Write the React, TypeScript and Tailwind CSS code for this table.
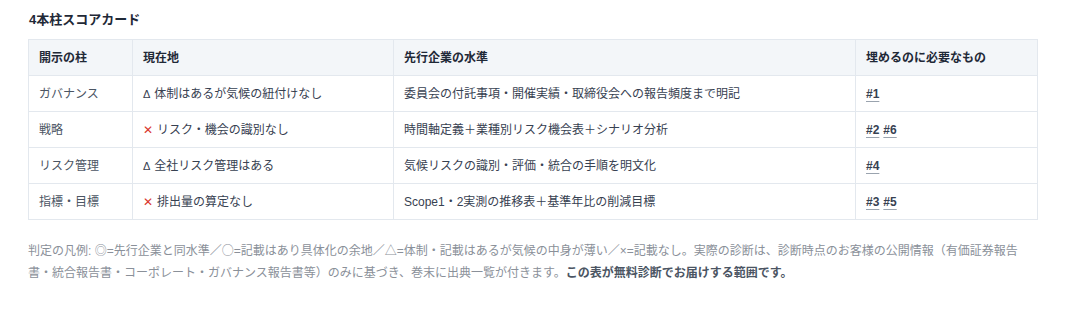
const rows = [
  {
    pillar: "ガバナンス",
    mark: "tri",
    current: "体制はあるが気候の紐付けなし",
    leader: "委員会の付託事項・開催実績・取締役会への報告頻度まで明記",
    needs: ["#1"],
  },
  {
    pillar: "戦略",
    mark: "x",
    current: "リスク・機会の識別なし",
    leader: "時間軸定義＋業種別リスク機会表＋シナリオ分析",
    needs: ["#2", "#6"],
  },
  {
    pillar: "リスク管理",
    mark: "tri",
    current: "全社リスク管理はある",
    leader: "気候リスクの識別・評価・統合の手順を明文化",
    needs: ["#4"],
  },
  {
    pillar: "指標・目標",
    mark: "x",
    current: "排出量の算定なし",
    leader: "Scope1・2実測の推移表＋基準年比の削減目標",
    needs: ["#3", "#5"],
  },
];

function Mark({ kind }: { kind: string }) {
  if (kind === "x") {
    return <span className="text-[#d9362b] mr-1">✕</span>;
  }
  return <span className="text-[#374151] mr-1 text-[11px]">Δ</span>;
}

export default function App() {
  return (
    <div
      className="bg-white px-[28px] pt-[10px] w-[1065px] min-h-[313px] text-[#374151]"
      style={{ fontFamily: '"Liberation Sans", "Noto Sans CJK JP", sans-serif' }}
    >
      <h2 className="text-[13px] font-bold text-[#1f2937] leading-[20px] mb-[9px] pl-px">
        4本柱スコアカード
      </h2>

      <table className="w-[1009px] border-collapse text-[12px] table-fixed">
        <colgroup>
          <col className="w-[104px]" />
          <col className="w-[261px]" />
          <col className="w-[462px]" />
          <col className="w-[182px]" />
        </colgroup>
        <thead>
          <tr className="bg-[#f3f6f9] h-[36px]">
            {["開示の柱", "現在地", "先行企業の水準", "埋めるのに必要なもの"].map((h) => (
              <th
                key={h}
                className="border border-[#e3e8ee] px-[10px] text-left font-bold text-[#1f2937]"
              >
                {h}
              </th>
            ))}
          </tr>
        </thead>
        <tbody>
          {rows.map((r) => (
            <tr key={r.pillar} className="h-[36px]">
              <td className="border border-[#e3e8ee] px-[10px] text-[#4b5563]">{r.pillar}</td>
              <td className="border border-[#e3e8ee] px-[10px] text-[#374151]">
                <Mark kind={r.mark} />
                {r.current}
              </td>
              <td className="border border-[#e3e8ee] px-[10px] text-[#374151]">{r.leader}</td>
              <td className="border border-[#e3e8ee] px-[10px]">
                <div className="flex gap-[4px]">
                  {r.needs.map((n) => (
                    <a
                      key={n}
                      href="#"
                      className="font-bold text-[#374151] underline decoration-[#9aa3ae] underline-offset-[3px]"
                    >
                      {n}
                    </a>
                  ))}
                </div>
              </td>
            </tr>
          ))}
        </tbody>
      </table>

      <p className="mt-[19px] w-[1000px] text-[12px] leading-[22px] text-[#8a9099]">
        判定の凡例: ◎=先行企業と同水準／<span style={{ fontFamily: '"Noto Sans CJK JP", sans-serif' }}>○</span>=記載はあり具体化の余地／△=体制・記載はあるが気候の中身が薄い／×=記載なし。実際の診断は、診断時点のお客様の公開情報（有価証券報告書・統合報告書・コーポレート・ガバナンス報告書等）のみに基づき、巻末に出典一覧が付きます。
        <strong className="font-bold text-[#4b5563]">この表が無料診断でお届けする範囲です。</strong>
      </p>
    </div>
  );
}
